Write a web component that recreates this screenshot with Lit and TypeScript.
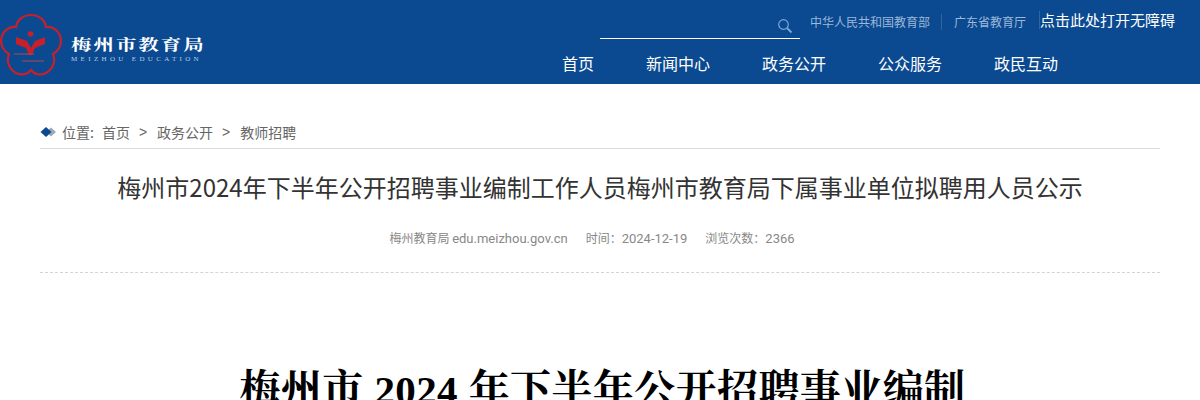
import { LitElement, html, css, svg } from "lit";
import { customElement } from "lit/decorators.js";

const SANS = css`"Noto Sans CJK SC", "Noto Sans", sans-serif`;

@customElement("app-root")
export class AppRoot extends LitElement {
  static styles = css`
    :host { display: block; height: 400px; overflow: hidden; background: #fff; font-family: ${SANS}; }
    .header { height: 84px; background: #0b4a91; display: flex; justify-content: space-between; }
    .brand { display: flex; align-items: flex-start; }
    .flower { width: 64px; height: 64px; margin: 13px 0 0 -1px; flex: none; display: block; }
    .brandtext { margin: 33px 0 0 8px; display: flex; flex-direction: column; }
    .cn { font-family: "Noto Serif CJK SC", "Noto Sans CJK SC", serif; font-weight: 700; font-size: 15px; line-height: 22px; letter-spacing: 1.5px; color: #fff; white-space: nowrap; transform: scaleX(1.36); transform-origin: left center; }
    .en { font-family: "Liberation Serif", serif; font-size: 7px; line-height: 9px; letter-spacing: 3.35px; color: #b9cde4; white-space: nowrap; margin-top: 0; }
    .right { width: 600px; flex: none; display: flex; flex-direction: column; }
    .top { display: flex; height: 39px; align-items: flex-start; }
    .search { width: 200px; height: 38px; border-bottom: 1px solid #fff; flex: none; display: flex; justify-content: flex-end; }
    .search svg { width: 16px; height: 16px; margin: 18px 7px 0 0; }
    .links { display: flex; align-items: center; margin: 14px 0 0 10px; height: 16px; font-size: 12px; line-height: 16px; color: #9db8d9; white-space: nowrap; }
    .links span + span { border-left: 1px solid #32659f; margin-left: 11px; padding-left: 12px; }
    .a11y { margin: 11px 0 0 13px; font-size: 15px; line-height: 18px; color: #fff; white-space: nowrap; border-left: 1px solid #32659f; }
    .nav { display: flex; gap: 52px; margin: 12px 0 0 -38px; font-size: 16px; line-height: 24px; color: #fff; white-space: nowrap; }
    .main { margin: 0 40px; }
    .crumb { display: flex; align-items: center; height: 65px; padding-top: 32px; box-sizing: border-box; border-bottom: 1px solid #dcdcdc; font-size: 14px; color: #666; white-space: nowrap; }
    .crumb svg { width: 17px; height: 10px; margin-right: 5px; flex: none; }
    .crumb .loc { margin-right: 8px; }
    .crumb .sep { margin: 0 10px 0 9px; font-family: "Liberation Sans", sans-serif; }
    .title { margin: 20px 0 0; font-weight: 400; font-size: 24px; line-height: 36px; color: #333; text-align: center; white-space: nowrap; }
    .meta { display: flex; justify-content: center; gap: 18px; margin-top: 24px; padding-right: 16px; height: 43px; font-size: 12px; line-height: 18px; color: #888; white-space: nowrap; }
    .meta b { font-family: Roboto, sans-serif; font-size: 13px; font-weight: 400; }
    .rule { border-top: 1px dashed #d4d4d4; }
    .doc { margin: 90px 0 0; padding-left: 5px; font-family: "Liberation Serif", "Noto Serif CJK SC", "Noto Sans CJK SC", serif; font-weight: 700; font-size: 41px; line-height: 54px; letter-spacing: 0.4px; color: #000; text-align: center; white-space: nowrap; }
  `;

  private flower() {
    const r = "#c8202b";
    return html`<svg class="flower" viewBox="0 0 64 64" aria-hidden="true">
      ${svg`
      <path d="M32 2c8 0 14 5 15 12 8-1 14 5 15 13 0 6-3 11-8 14 3 7 0 15-7 19-6 3-12 1-15-3-3 4-9 6-15 3-7-4-10-12-7-19-5-3-8-8-8-14 1-8 7-14 15-13C18 7 24 2 32 2Z" fill="none" stroke="${r}" stroke-width="2.2"/>
      <circle cx="31.500" cy="21" r="2.800" fill="${r}"/>
      <path d="M17 24l11 4 4 7 4-7 10-4v7l-10 4-3 7h-3l-3-7-10-4Z" fill="${r}"/>
      <path d="M15 41h20M23 48h22" stroke="#b5474f" stroke-width="1" fill="none"/>
      `}
    </svg>`;
  }

  render() {
    return html`
      <header class="header">
        <div class="brand">
          ${this.flower()}
          <div class="brandtext">
            <div class="cn">梅州市教育局</div>
            <div class="en">MEIZHOU EDUCATION</div>
          </div>
        </div>
        <div class="right">
          <div class="top">
            <div class="search">
              <svg viewBox="0 0 16 16" aria-hidden="true" fill="none" stroke="#7ba7d8">
                <circle cx="6.500" cy="6.500" r="4.800" stroke-width="1.200"/>
                <path d="M10 10l4.500 4.500" stroke-width="1.800"/>
              </svg>
            </div>
            <div class="links"><span>中华人民共和国教育部</span><span>广东省教育厅</span></div>
            <div class="a11y">点击此处打开无障碍</div>
          </div>
          <nav class="nav"><span>首页</span><span>新闻中心</span><span>政务公开</span><span>公众服务</span><span>政民互动</span></nav>
        </div>
      </header>
      <main class="main">
        <div class="crumb">
          <svg viewBox="0 0 17 10" aria-hidden="true"><path d="M11 0.500l5 4.500-5 4.500-5-4.500Z" fill="#9aa9bb"/><path d="M6 0l5.500 5-5.500 5-5.500-5Z" fill="#0b4a91"/></svg>
          <span class="loc">位置:</span><span>首页</span><span class="sep">&gt;</span><span>政务公开</span><span class="sep">&gt;</span><span>教师招聘</span>
        </div>
        <h1 class="title">梅州市2024年下半年公开招聘事业编制工作人员梅州市教育局下属事业单位拟聘用人员公示</h1>
        <div class="meta"><span>梅州教育局 <b>edu.meizhou.gov.cn</b></span><span>时间&#xFF1A;<b>2024-12-19</b></span><span>浏览次数&#xFF1A;<b>2366</b></span></div>
        <div class="rule"></div>
        <div class="doc">梅州市 2024 年下半年公开招聘事业编制</div>
      </main>
    `;
  }
}
